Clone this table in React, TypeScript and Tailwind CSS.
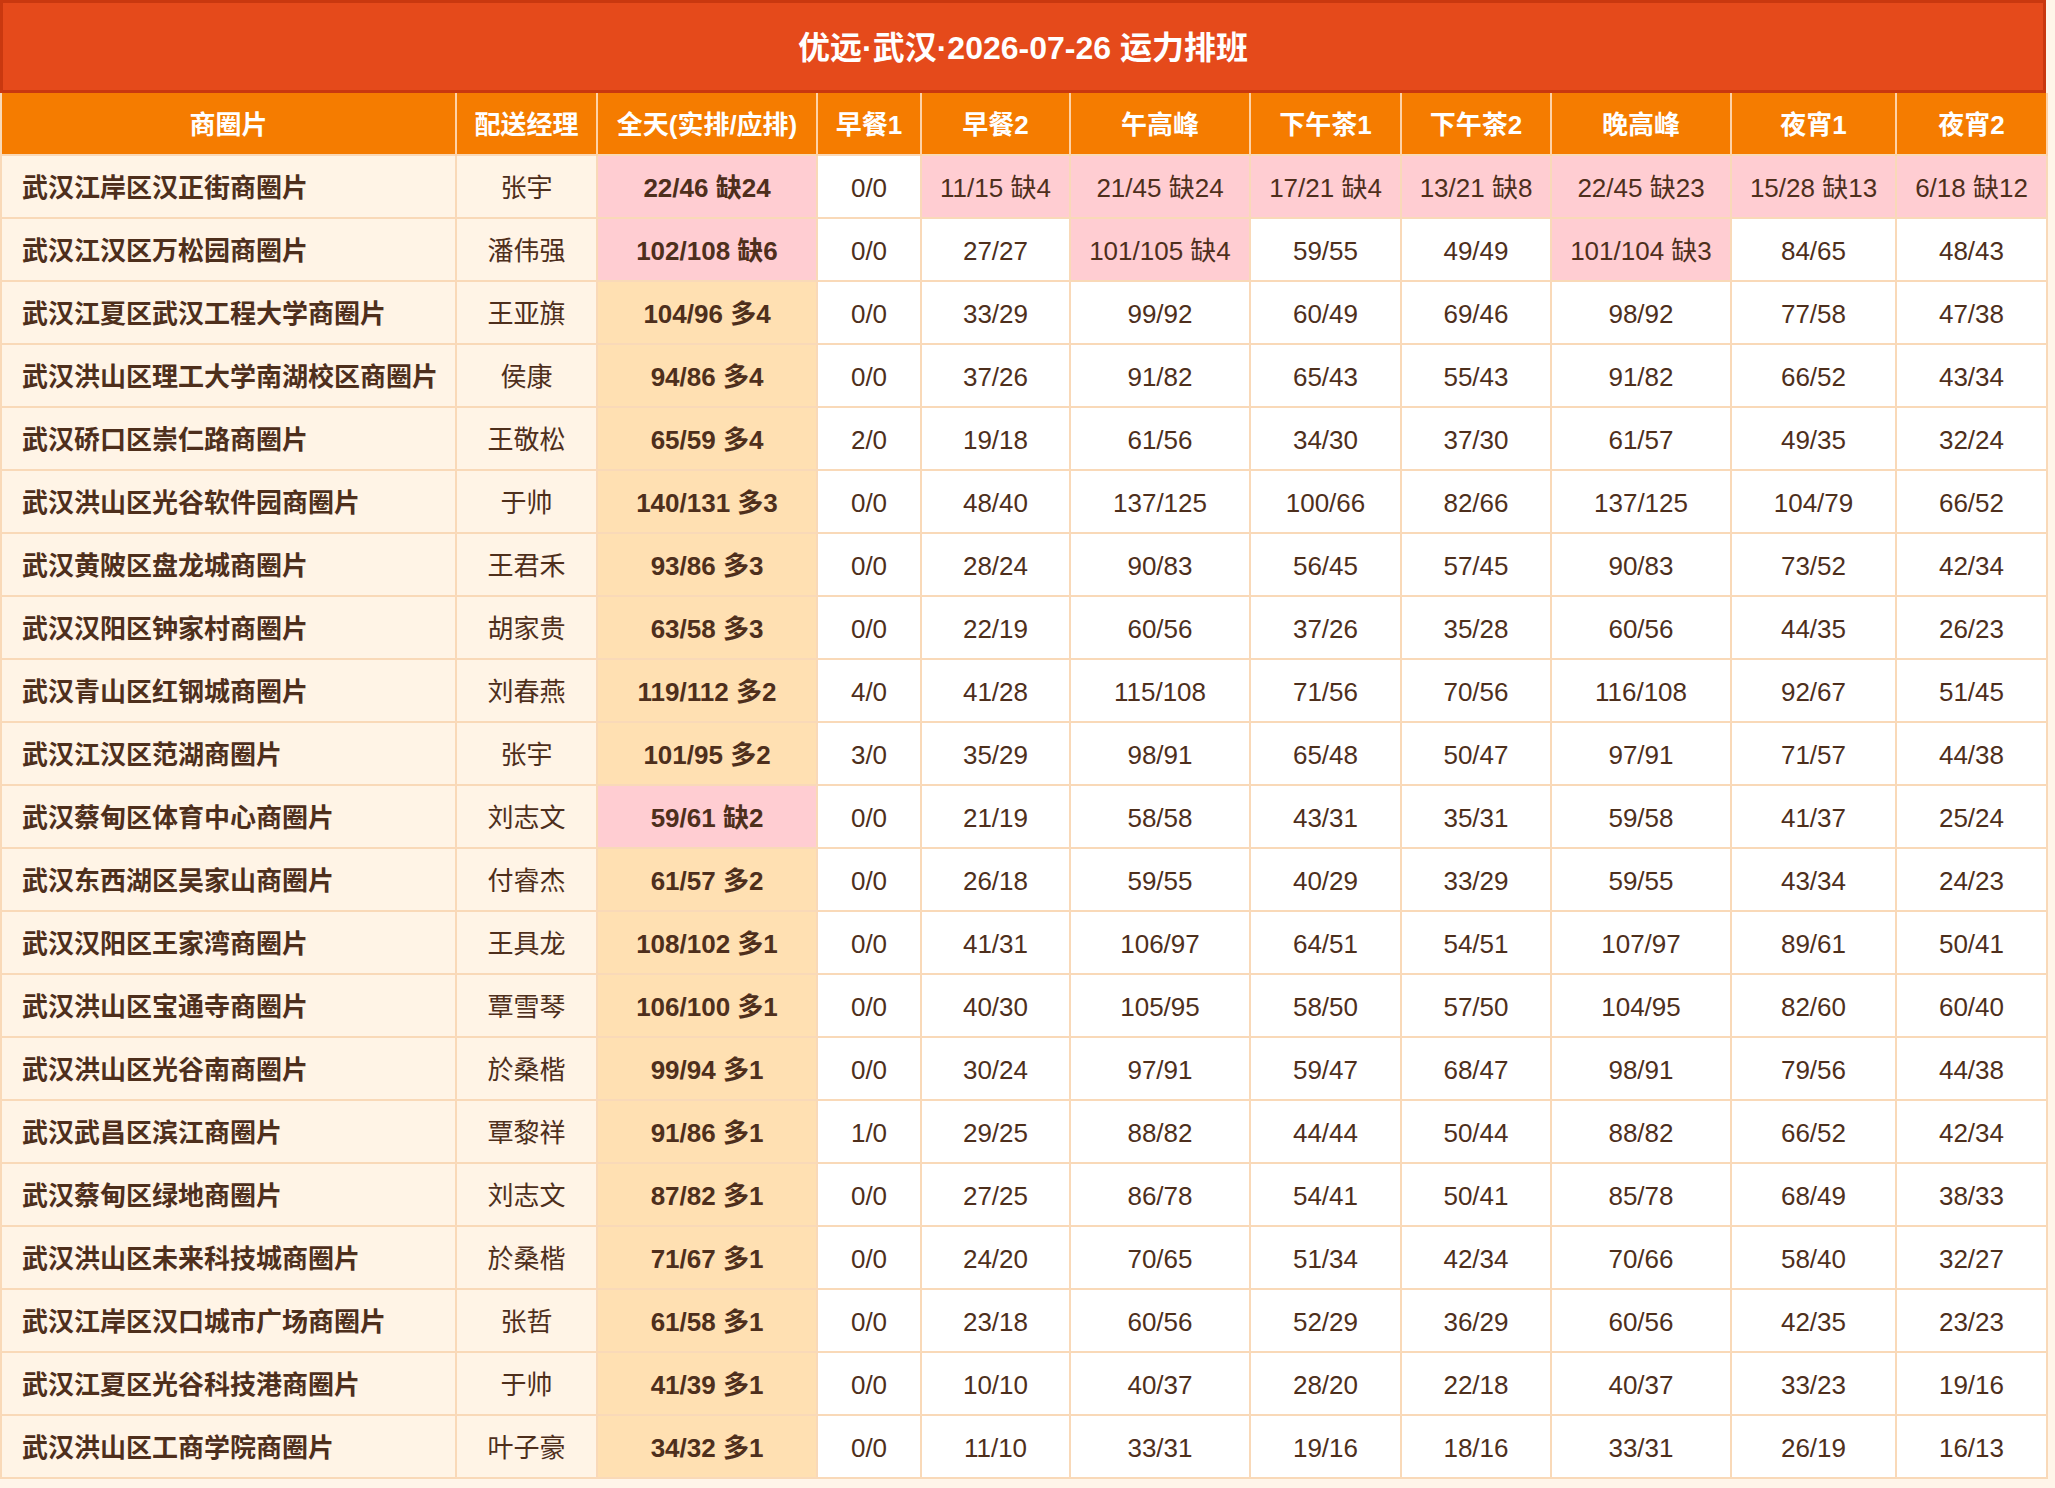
const columns = [
  { label: "商圈片", width: "w-[455px]" },
  { label: "配送经理", width: "w-[141px]" },
  { label: "全天(实排/应排)", width: "w-[220px]" },
  { label: "早餐1", width: "w-[104px]" },
  { label: "早餐2", width: "w-[149px]" },
  { label: "午高峰", width: "w-[180px]" },
  { label: "下午茶1", width: "w-[151px]" },
  { label: "下午茶2", width: "w-[150px]" },
  { label: "晚高峰", width: "w-[180px]" },
  { label: "夜宵1", width: "w-[165px]" },
  { label: "夜宵2", width: "w-[151px]" },
];

// [商圈片, 经理, 全天, 早餐1, 早餐2, 午高峰, 下午茶1, 下午茶2, 晚高峰, 夜宵1, 夜宵2]
const rows: string[][] = [
  ["武汉江岸区汉正街商圈片", "张宇", "22/46 缺24", "0/0", "11/15 缺4", "21/45 缺24", "17/21 缺4", "13/21 缺8", "22/45 缺23", "15/28 缺13", "6/18 缺12"],
  ["武汉江汉区万松园商圈片", "潘伟强", "102/108 缺6", "0/0", "27/27", "101/105 缺4", "59/55", "49/49", "101/104 缺3", "84/65", "48/43"],
  ["武汉江夏区武汉工程大学商圈片", "王亚旗", "104/96 多4", "0/0", "33/29", "99/92", "60/49", "69/46", "98/92", "77/58", "47/38"],
  ["武汉洪山区理工大学南湖校区商圈片", "侯康", "94/86 多4", "0/0", "37/26", "91/82", "65/43", "55/43", "91/82", "66/52", "43/34"],
  ["武汉硚口区崇仁路商圈片", "王敬松", "65/59 多4", "2/0", "19/18", "61/56", "34/30", "37/30", "61/57", "49/35", "32/24"],
  ["武汉洪山区光谷软件园商圈片", "于帅", "140/131 多3", "0/0", "48/40", "137/125", "100/66", "82/66", "137/125", "104/79", "66/52"],
  ["武汉黄陂区盘龙城商圈片", "王君禾", "93/86 多3", "0/0", "28/24", "90/83", "56/45", "57/45", "90/83", "73/52", "42/34"],
  ["武汉汉阳区钟家村商圈片", "胡家贵", "63/58 多3", "0/0", "22/19", "60/56", "37/26", "35/28", "60/56", "44/35", "26/23"],
  ["武汉青山区红钢城商圈片", "刘春燕", "119/112 多2", "4/0", "41/28", "115/108", "71/56", "70/56", "116/108", "92/67", "51/45"],
  ["武汉江汉区范湖商圈片", "张宇", "101/95 多2", "3/0", "35/29", "98/91", "65/48", "50/47", "97/91", "71/57", "44/38"],
  ["武汉蔡甸区体育中心商圈片", "刘志文", "59/61 缺2", "0/0", "21/19", "58/58", "43/31", "35/31", "59/58", "41/37", "25/24"],
  ["武汉东西湖区吴家山商圈片", "付睿杰", "61/57 多2", "0/0", "26/18", "59/55", "40/29", "33/29", "59/55", "43/34", "24/23"],
  ["武汉汉阳区王家湾商圈片", "王具龙", "108/102 多1", "0/0", "41/31", "106/97", "64/51", "54/51", "107/97", "89/61", "50/41"],
  ["武汉洪山区宝通寺商圈片", "覃雪琴", "106/100 多1", "0/0", "40/30", "105/95", "58/50", "57/50", "104/95", "82/60", "60/40"],
  ["武汉洪山区光谷南商圈片", "於桑楷", "99/94 多1", "0/0", "30/24", "97/91", "59/47", "68/47", "98/91", "79/56", "44/38"],
  ["武汉武昌区滨江商圈片", "覃黎祥", "91/86 多1", "1/0", "29/25", "88/82", "44/44", "50/44", "88/82", "66/52", "42/34"],
  ["武汉蔡甸区绿地商圈片", "刘志文", "87/82 多1", "0/0", "27/25", "86/78", "54/41", "50/41", "85/78", "68/49", "38/33"],
  ["武汉洪山区未来科技城商圈片", "於桑楷", "71/67 多1", "0/0", "24/20", "70/65", "51/34", "42/34", "70/66", "58/40", "32/27"],
  ["武汉江岸区汉口城市广场商圈片", "张哲", "61/58 多1", "0/0", "23/18", "60/56", "52/29", "36/29", "60/56", "42/35", "23/23"],
  ["武汉江夏区光谷科技港商圈片", "于帅", "41/39 多1", "0/0", "10/10", "40/37", "28/20", "22/18", "40/37", "33/23", "19/16"],
  ["武汉洪山区工商学院商圈片", "叶子豪", "34/32 多1", "0/0", "11/10", "33/31", "19/16", "18/16", "33/31", "26/19", "16/13"],
];

function slotClass(value: string) {
  return value.includes("缺") ? "bg-[#ffcdd2]" : "bg-white";
}

function dayClass(value: string) {
  return value.includes("缺") ? "bg-[#ffcdd2]" : "bg-[#ffe0b2]";
}

export default function App() {
  return (
    <div
      className="min-h-screen bg-[#fff5e9] text-[#4e2f1c]"
      style={{ fontFamily: '"Liberation Sans", "Noto Sans CJK SC", sans-serif' }}
    >
      <div className="w-[2046px]">
        {/* 标题 */}
        <div className="flex h-[93px] items-center justify-center border-[3px] border-[#c9380f] bg-[#e54a1b] pt-[2px] text-[32px] font-bold text-white">
          优远·武汉·2026-07-26 运力排班
        </div>

        <table className="w-[2046px] table-fixed border-collapse text-[26px]">
          <colgroup>
            {columns.map((c) => (
              <col key={c.label} className={c.width} />
            ))}
          </colgroup>
          <thead>
            <tr className="h-[62px] bg-[#f57c00] text-white">
              {columns.map((c) => (
                <th key={c.label} className="border-x-2 border-[#ffd2a6] pt-[4px] font-bold first:border-l-[#f9d9b8]">
                  {c.label}
                </th>
              ))}
            </tr>
          </thead>
          <tbody>
            {rows.map((r) => (
              <tr key={r[0]} className="h-[63px]">
                <td className="border-2 border-[#f9d9b8] bg-[#fff4e6] pt-[4px] pl-[20px] text-left font-bold">{r[0]}</td>
                <td className="border-2 border-[#f9d9b8] bg-[#fff4e6] pt-[4px] text-center">{r[1]}</td>
                <td className={`border-2 border-[#f9d9b8] pt-[4px] text-center font-bold ${dayClass(r[2])}`}>{r[2]}</td>
                {r.slice(3).map((v, i) => (
                  <td key={i} className={`border-2 border-[#f9d9b8] pt-[4px] text-center ${slotClass(v)}`}>
                    {v}
                  </td>
                ))}
              </tr>
            ))}
          </tbody>
        </table>
      </div>
    </div>
  );
}
